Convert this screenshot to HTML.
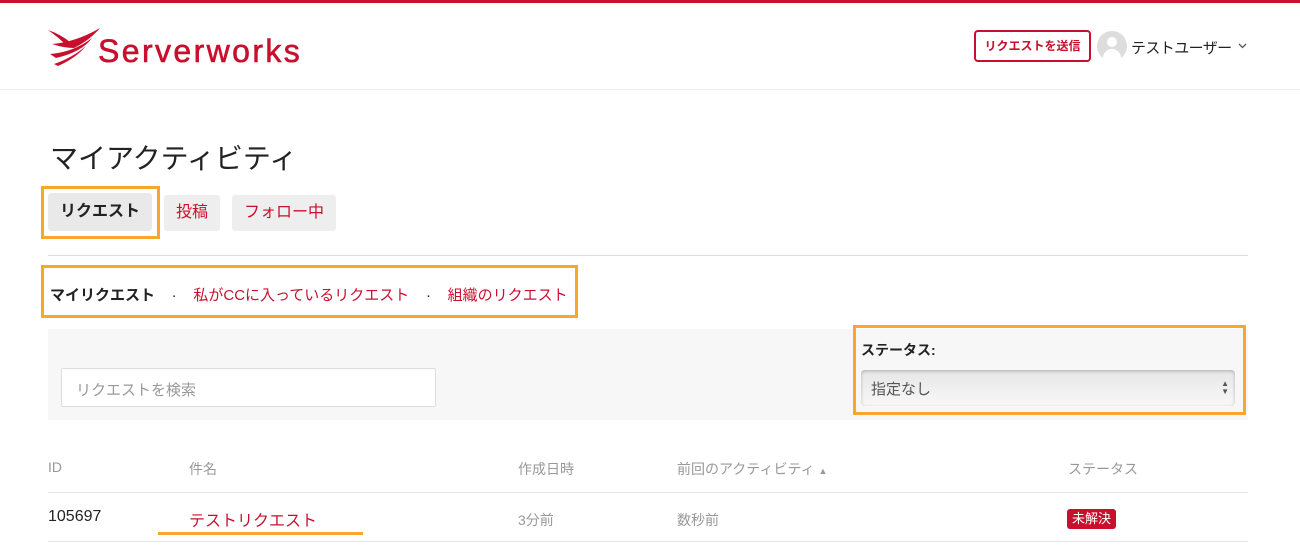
<!DOCTYPE html>
<html><head><meta charset="utf-8"><style>
*{box-sizing:border-box;margin:0;padding:0}
body{width:1300px;height:550px;overflow:hidden;background:#fff;font-family:"Liberation Sans","Noto Sans CJK JP",sans-serif;color:#222;position:relative}
.abs{position:absolute}
.red{color:#c8102e}
.ob{position:absolute;border:3px solid #f9a72b}
</style></head><body>
<div class="abs" style="left:0;top:0;width:1300px;height:3px;background:#c8102e"></div>
<div class="abs" style="left:0;top:89px;width:1300px;height:1px;background:#eee"></div>
<svg class="abs" style="left:46px;top:26px" width="58" height="40" viewBox="0 0 58 40">
<path d="M2 4 Q14 8 24 16 L20 19 Q12 11 2 4 Z" fill="#c8102e"/>
<path d="M6 18 Q30 16 54 2 Q44 14 28 22 Q18 22 6 18 Z" fill="#c8102e"/>
<path d="M4 28 Q28 26 46 12 Q36 26 10 32 Z" fill="#c8102e"/>
<path d="M8 38 Q26 32 40 20 Q30 32 12 40 Z" fill="#c8102e"/>
</svg>
<div class="abs red" style="left:98px;top:33px;font-size:32px;font-weight:normal;letter-spacing:2.4px;-webkit-text-stroke:0.6px #c8102e">Serverworks</div>
<div class="abs" style="left:974px;top:30px;width:117px;height:32px;border:2px solid #c8102e;border-radius:4px;color:#c8102e;font-size:12px;font-weight:bold;text-align:center;line-height:28px">リクエストを送信</div>
<div class="abs" style="left:1097px;top:31px;width:30px;height:30px;border-radius:50%;background:#ddd;overflow:hidden">
<div style="position:absolute;left:10px;top:6px;width:10px;height:10px;border-radius:50%;background:#fff"></div>
<div style="position:absolute;left:6px;top:18px;width:18px;height:12px;border-radius:9px 9px 0 0;background:#fff"></div></div>
<div class="abs" style="left:1131px;top:37px;font-size:15px;letter-spacing:-0.6px">テストユーザー</div>
<svg class="abs" style="left:1238px;top:43px" width="9" height="6" viewBox="0 0 9 6"><path d="M1 1 L4.5 4.5 L8 1" stroke="#555" stroke-width="1.3" fill="none"/></svg>

<div class="abs" style="left:50px;top:137px;font-size:28px;color:#222">マイアクティビティ</div>
<div class="abs" style="left:48px;top:193px;width:104px;height:38px;background:#e9e9e9;border-radius:3px;font-size:16px;font-weight:bold;text-align:center;line-height:38px">リクエスト</div>
<div class="ob" style="left:41px;top:186px;width:119px;height:53px"></div>
<div class="abs red" style="left:164px;top:195px;width:56px;height:36px;background:#eee;border-radius:3px;font-size:16px;text-align:center;line-height:36px">投稿</div>
<div class="abs red" style="left:232px;top:195px;width:104px;height:36px;background:#eee;border-radius:3px;font-size:16px;text-align:center;line-height:36px">フォロー中</div>
<div class="abs" style="left:48px;top:255px;width:1200px;height:1px;background:#ddd"></div>
<div class="abs" style="left:50px;top:284px;font-size:15px;white-space:nowrap"><b>マイリクエスト</b>&nbsp;&nbsp;&nbsp;&nbsp;·&nbsp;&nbsp;&nbsp;&nbsp;<span class="red">私がCCに入っているリクエスト</span>&nbsp;&nbsp;&nbsp;&nbsp;·&nbsp;&nbsp;&nbsp;&nbsp;<span class="red">組織のリクエスト</span></div>
<div class="ob" style="left:41px;top:265px;width:537px;height:53px"></div>

<div class="abs" style="left:48px;top:329px;width:1200px;height:91px;background:#f7f7f7"></div>
<div class="abs" style="left:61px;top:368px;width:375px;height:39px;background:#fff;border:1px solid #ddd;border-radius:2px;font-size:15px;color:#999;padding:10px 14px">リクエストを検索</div>
<div class="abs" style="left:861px;top:340px;font-size:14px;font-weight:bold">ステータス:</div>
<div class="abs" style="left:861px;top:370px;width:374px;height:36px;border-radius:4px;background:linear-gradient(#e6e6e6,#f8f8f8);box-shadow:inset 0 1px 3px rgba(0,0,0,.25);font-size:15px;color:#555;padding:8px 10px">指定なし<span style="position:absolute;right:6px;top:10px;font-size:8px;line-height:8px;color:#555">▲<br>▼</span></div>
<div class="ob" style="left:853px;top:325px;width:393px;height:90px"></div>

<div class="abs" style="left:48px;top:459px;font-size:14px;color:#999;width:1200px;white-space:nowrap">
<span style="position:absolute;left:0">ID</span><span style="position:absolute;left:141px">件名</span><span style="position:absolute;left:470px">作成日時</span><span style="position:absolute;left:629px">前回のアクティビティ <small style="font-size:9px">▲</small></span><span style="position:absolute;left:1020px">ステータス</span></div>
<div class="abs" style="left:48px;top:492px;width:1200px;height:1px;background:#e5e5e5"></div>
<div class="abs" style="left:48px;top:508px;font-size:16px">105697</div>
<div class="abs red" style="left:189px;top:507px;font-size:16px">テストリクエスト</div>
<div class="abs" style="left:158px;top:532px;width:205px;height:3px;background:#f9a72b"></div>
<div class="abs" style="left:518px;top:510px;font-size:14px;color:#999">3分前</div>
<div class="abs" style="left:677px;top:510px;font-size:14px;color:#999">数秒前</div>
<div class="abs" style="left:1067px;top:509px;width:49px;height:20px;background:#c8102e;border-radius:3px;color:#fff;font-size:13px;text-align:center;line-height:20px">未解決</div>
<div class="abs" style="left:48px;top:541px;width:1200px;height:1px;background:#e5e5e5"></div>
</body></html>
